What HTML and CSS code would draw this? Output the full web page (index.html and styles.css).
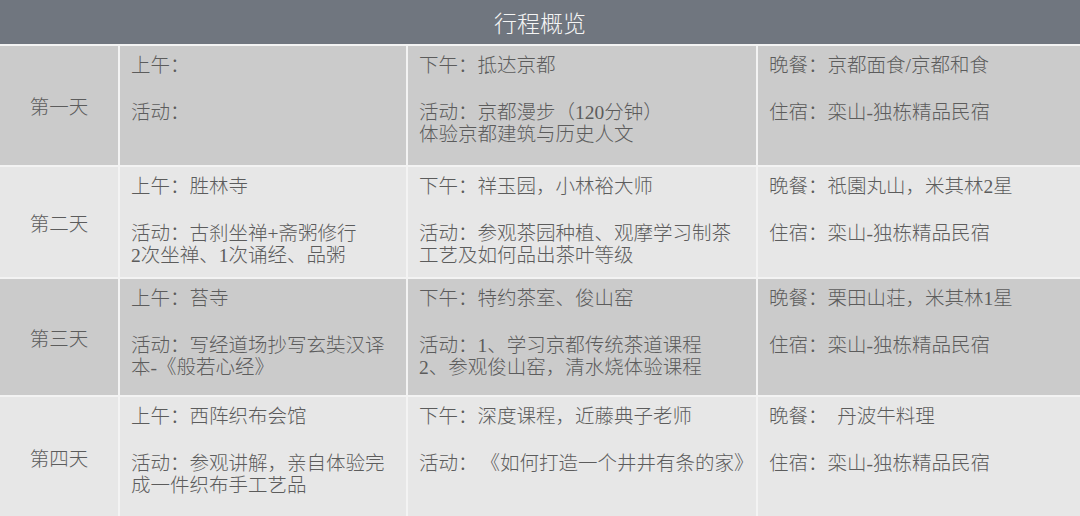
FILE: index.html
```html
<!DOCTYPE html>
<html lang="zh-CN">
<head>
<meta charset="utf-8">
<title>行程概览</title>
<link rel="stylesheet" href="styles.css">
</head>
<body>
<div class="plan">
  <div class="head">行程概览</div>

  <div class="day dark">第一天</div>
  <div class="cell dark"><p>上午：</p><p>活动：</p></div>
  <div class="cell dark"><p>下午：抵达京都</p><p>活动：京都漫步（120分钟）<br>体验京都建筑与历史人文</p></div>
  <div class="cell dark"><p>晚餐：京都面食/京都和食</p><p>住宿：栾山-独栋精品民宿</p></div>

  <div class="day light">第二天</div>
  <div class="cell light"><p>上午：胜林寺</p><p>活动：古刹坐禅+斋粥修行<br>2次坐禅、1次诵经、品粥</p></div>
  <div class="cell light"><p>下午：祥玉园，小林裕大师</p><p>活动：参观茶园种植、观摩学习制茶<br>工艺及如何品出茶叶等级</p></div>
  <div class="cell light"><p>晚餐：祇園丸山，米其林2星</p><p>住宿：栾山-独栋精品民宿</p></div>

  <div class="day dark">第三天</div>
  <div class="cell dark"><p>上午：苔寺</p><p>活动：写经道场抄写玄奘汉译<br>本-《般若心经》</p></div>
  <div class="cell dark"><p>下午：特约茶室、俊山窑</p><p>活动：1、学习京都传统茶道课程<br>2、参观俊山窑，清水烧体验课程</p></div>
  <div class="cell dark"><p>晚餐：栗田山荘，米其林1星</p><p>住宿：栾山-独栋精品民宿</p></div>

  <div class="day light">第四天</div>
  <div class="cell light"><p>上午：西阵织布会馆</p><p>活动：参观讲解，亲自体验完<br>成一件织布手工艺品</p></div>
  <div class="cell light"><p>下午：深度课程，近藤典子老师</p><p>活动：<span class="gap"></span>《如何打造一个井井有条的家》</p></div>
  <div class="cell light"><p>晚餐：&nbsp;&nbsp;丹波牛料理</p><p>住宿：栾山-独栋精品民宿</p></div>
</div>
</body>
</html>
```

FILE: styles.css
```css
html, body {
  margin: 0;
  padding: 0;
  background: #f2f2f2;
}

body {
  width: 1080px;
  height: 516px;
  overflow: hidden;
  font-family: "Liberation Serif", "Noto Sans CJK SC", sans-serif;
  font-weight: 300;
  color: #5c5c5c;
}

.plan {
  display: grid;
  grid-template-columns: 118px 286px 348px 322px;
  grid-template-rows: 44px 119px 110px 116px 121px;
  gap: 2px;
  background: #f3f3f3;
}

.head {
  grid-column: 1 / -1;
  background: #70767f;
  color: #f4f4f4;
  font-family: "Noto Sans CJK SC", sans-serif;
  font-size: 23px;
  display: flex;
  align-items: center;
  justify-content: center;
}

.dark {
  background: #cbcbcb;
}

.light {
  background: #e7e7e7;
}

.day {
  display: flex;
  align-items: center;
  justify-content: center;
  font-size: 19.5px;
  font-family: "Noto Sans CJK SC", sans-serif;
}

.cell {
  padding: 9px 8px 0 11px;
  font-size: 19.5px;
  line-height: 22.5px;
}

.cell p {
  margin: 0 0 24px 0;
  white-space: nowrap;
}

.gap {
  display: inline-block;
  width: 3px;
}
```
